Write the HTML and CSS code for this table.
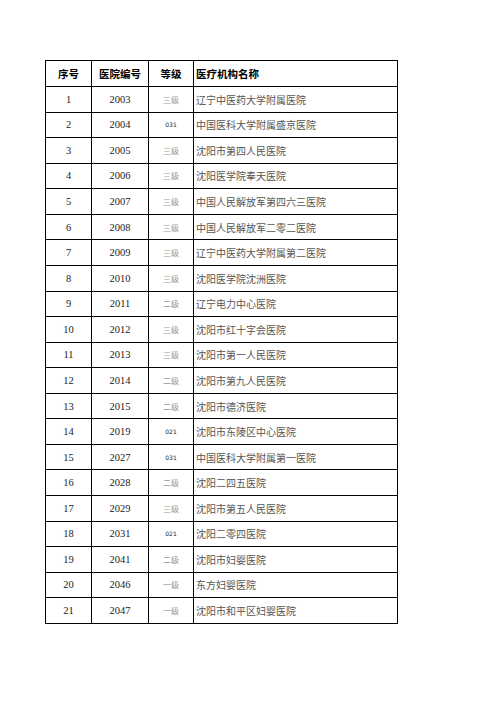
FILE: index.html
```html
<!DOCTYPE html>
<html lang="zh">
<head>
<meta charset="utf-8">
<link rel="stylesheet" href="styles.css">
</head>
<body>
<table class="list">
<colgroup><col class="c1"><col class="c2"><col class="c3"><col class="c4"></colgroup>
<thead>
<tr><th>序号</th><th>医院编号</th><th>等级</th><th class="name">医疗机构名称</th></tr>
</thead>
<tbody>
<tr><td class="num">1</td><td class="num">2003</td><td class="lv">三级</td><td class="name">辽宁中医药大学附属医院</td></tr>
<tr><td class="num">2</td><td class="num">2004</td><td class="code">031</td><td class="name">中国医科大学附属盛京医院</td></tr>
<tr><td class="num">3</td><td class="num">2005</td><td class="lv">三级</td><td class="name">沈阳市第四人民医院</td></tr>
<tr><td class="num">4</td><td class="num">2006</td><td class="lv">三级</td><td class="name">沈阳医学院奉天医院</td></tr>
<tr><td class="num">5</td><td class="num">2007</td><td class="lv">三级</td><td class="name">中国人民解放军第四六三医院</td></tr>
<tr><td class="num">6</td><td class="num">2008</td><td class="lv">三级</td><td class="name">中国人民解放军二零二医院</td></tr>
<tr><td class="num">7</td><td class="num">2009</td><td class="lv">三级</td><td class="name">辽宁中医药大学附属第二医院</td></tr>
<tr><td class="num">8</td><td class="num">2010</td><td class="lv">三级</td><td class="name">沈阳医学院沈洲医院</td></tr>
<tr><td class="num">9</td><td class="num">2011</td><td class="lv">二级</td><td class="name">辽宁电力中心医院</td></tr>
<tr><td class="num">10</td><td class="num">2012</td><td class="lv">三级</td><td class="name">沈阳市红十字会医院</td></tr>
<tr><td class="num">11</td><td class="num">2013</td><td class="lv">三级</td><td class="name">沈阳市第一人民医院</td></tr>
<tr><td class="num">12</td><td class="num">2014</td><td class="lv">二级</td><td class="name">沈阳市第九人民医院</td></tr>
<tr><td class="num">13</td><td class="num">2015</td><td class="lv">二级</td><td class="name">沈阳市德济医院</td></tr>
<tr><td class="num">14</td><td class="num">2019</td><td class="code">021</td><td class="name">沈阳市东陵区中心医院</td></tr>
<tr><td class="num">15</td><td class="num">2027</td><td class="code">031</td><td class="name">中国医科大学附属第一医院</td></tr>
<tr><td class="num">16</td><td class="num">2028</td><td class="lv">二级</td><td class="name">沈阳二四五医院</td></tr>
<tr><td class="num">17</td><td class="num">2029</td><td class="lv">三级</td><td class="name">沈阳市第五人民医院</td></tr>
<tr><td class="num">18</td><td class="num">2031</td><td class="code">021</td><td class="name">沈阳二零四医院</td></tr>
<tr><td class="num">19</td><td class="num">2041</td><td class="lv">二级</td><td class="name">沈阳市妇婴医院</td></tr>
<tr><td class="num">20</td><td class="num">2046</td><td class="lv">一级</td><td class="name">东方妇婴医院</td></tr>
<tr><td class="num">21</td><td class="num">2047</td><td class="lv">一级</td><td class="name">沈阳市和平区妇婴医院</td></tr>
</tbody>
</table>
</body>
</html>
```

FILE: styles.css
```css
html, body {
  margin: 0;
  padding: 0;
  background: #ffffff;
}
body {
  padding: 60px 0 0 45px;
  font-family: "Liberation Serif", "Noto Sans CJK SC", serif;
}
.list {
  border-collapse: collapse;
  table-layout: fixed;
  width: 352px;
}
.c1 { width: 46px; }
.c2 { width: 57px; }
.c3 { width: 45px; }
.c4 { width: 204px; }
.list th, .list td {
  border: 1px solid #000;
  padding: 0;
  text-align: center;
  vertical-align: middle;
  white-space: nowrap;
  overflow: hidden;
}
.list thead tr { height: 26px; }
.list tbody tr { height: 25.57px; }
.list th {
  font-family: "Noto Sans CJK SC", sans-serif;
  font-weight: 700;
  font-size: 10.5px;
  color: #000;
}
.list th.name, .list td.name {
  text-align: left;
  padding-left: 2px;
}
.num {
  font-family: "Liberation Serif", serif;
  font-size: 10.5px;
  color: #222;
}
.lv {
  font-family: "Noto Sans CJK SC", sans-serif;
  font-size: 8px;
  font-weight: 400;
  color: #999;
}
.code {
  font-family: "DejaVu Sans", sans-serif;
  font-size: 6px;
  font-weight: 400;
  color: #222;
}
td.name {
  font-family: "Noto Sans CJK SC", sans-serif;
  font-size: 10px;
  font-weight: 400;
  color: #555;
}
```
